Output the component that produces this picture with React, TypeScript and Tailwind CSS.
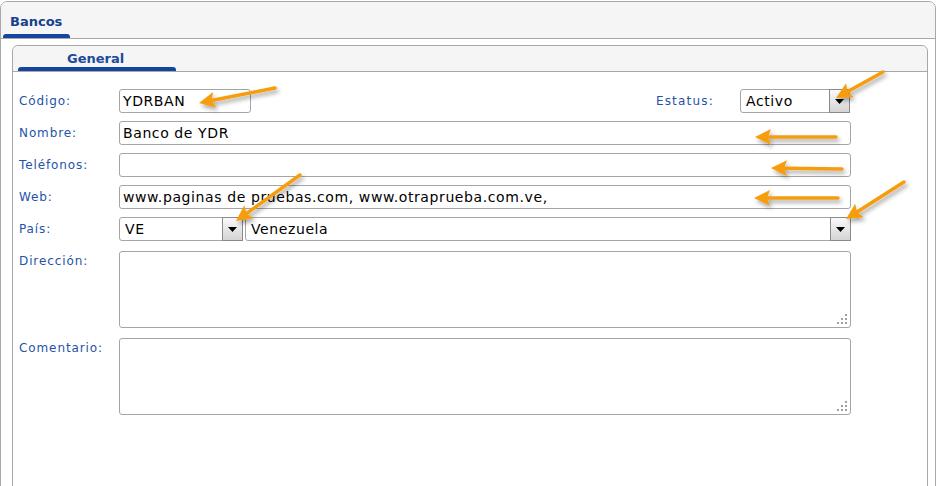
import React from "react";

const font = { fontFamily: '"DejaVu Sans", Verdana, sans-serif' };

function DropBtn() {
  return (
    <div className="-my-[1px] -mr-[1px] flex w-[21px] shrink-0 items-center justify-center border border-[#8a8a8a] bg-gradient-to-b from-[#fafafa] to-[#d4d4d4]">
      <svg width="9" height="5" viewBox="0 0 9 5">
        <polygon points="0,0 9,0 4.5,5" fill="#000" />
      </svg>
    </div>
  );
}

function Select({ value, className }: { value: string; className: string }) {
  return (
    <div className={"flex h-[24px] items-stretch rounded-[3px] border border-[#a5a5a5] bg-white " + className}>
      <div className="flex flex-1 items-center pl-[5px] text-[14px] tracking-[0.6px] text-black">{value}</div>
      <DropBtn />
    </div>
  );
}

function Input({ value, className }: { value?: string; className: string }) {
  return (
    <div className={"flex h-[24px] items-center whitespace-nowrap rounded-[3px] border border-[#a5a5a5] bg-white pl-[3px] text-[14px] tracking-[0.6px] text-black " + className}>
      {value}
    </div>
  );
}

function Label({ children, top }: { children: React.ReactNode; top?: boolean }) {
  return (
    <div className={"w-[100px] shrink-0 text-[12px] tracking-[0.9px] text-[#2453a8] " + (top ? "pt-[1px]" : "")}>
      {children}
    </div>
  );
}

function Grip() {
  const dots = [
    [8, 0],
    [4, 4],
    [8, 4],
    [0, 8],
    [4, 8],
    [8, 8],
  ];
  return (
    <svg className="absolute bottom-[2px] right-[2px]" width="11" height="11" viewBox="0 0 11 11">
      {dots.map(([x, y], i) => (
        <rect key={i} x={x} y={y} width="2" height="2" fill="#a0a0a0" />
      ))}
    </svg>
  );
}

function TextArea() {
  return <div className="relative h-[77px] w-[732px] rounded-[3px] border border-[#a5a5a5] bg-white"><Grip /></div>;
}

const arrows: [number, number, number, number][] = [
  [275, 88, 199, 103],
  [883, 72, 836, 98],
  [836, 137, 755, 137],
  [842, 169, 771, 168],
  [838, 198, 754, 198],
  [300, 175, 236, 221],
  [904, 182, 846, 219],
];

function Arrows() {
  return (
    <svg className="pointer-events-none absolute left-0 top-0" width="937" height="486">
      <defs>
        <filter id="sh" x="-20%" y="-20%" width="160%" height="160%">
          <feDropShadow dx="2" dy="3" stdDeviation="2" floodColor="#000" floodOpacity="0.35" />
        </filter>
      </defs>
      <g filter="url(#sh)">
        {arrows.map(([x1, y1, x2, y2], i) => {
          const dx = x2 - x1;
          const dy = y2 - y1;
          const len = Math.hypot(dx, dy);
          const ux = dx / len;
          const uy = dy / len;
          const hl = 16;
          const hw = 8;
          const bx = x2 - ux * hl;
          const by = y2 - uy * hl;
          const px = -uy;
          const py = ux;
          return (
            <g key={i}>
              <line x1={x1} y1={y1} x2={bx + ux * 2} y2={by + uy * 2} stroke="#f69d10" strokeWidth="3.5" strokeLinecap="round" />
              <polygon
                points={`${x2},${y2} ${bx + px * hw},${by + py * hw} ${bx + ux * 3},${by + uy * 3} ${bx - px * hw},${by - py * hw}`}
                fill="#f69d10"
              />
            </g>
          );
        })}
      </g>
    </svg>
  );
}

export default function App() {
  return (
    <div className="relative h-[486px] w-[937px] overflow-hidden bg-white" style={font}>
      <div className="mt-[1px] h-[520px] w-[936px] rounded-t-[7px] border border-[#a8a8a8] bg-white">
        {/* outer header */}
        <div className="flex h-[37px] items-end rounded-t-[7px] border-b border-[#a8a8a8] bg-[#f5f5f5] pl-[2px]">
          <div className="flex w-[67px] flex-col">
            <div className="pl-[7px] text-[13px] font-bold leading-none text-[#173f8e]">Bancos</div>
            <div className="mt-[6px] h-[4px] rounded-t-[3px] bg-[#1446a0]" />
          </div>
        </div>
        {/* inner panel */}
        <div className="ml-[11px] mr-[7px] mt-[6px] h-[470px] rounded-t-[6px] border border-[#a8a8a8] bg-white">
          <div className="flex h-[26px] items-end rounded-t-[6px] border-b border-[#a8a8a8] bg-[#f5f5f5] pl-[5px]">
            <div className="flex w-[158px] flex-col">
              <div className="pl-[49px] text-[13px] font-bold leading-none text-[#1c4a9c]">General</div>
              <div className="mt-[2px] h-[4px] rounded-t-[3px] bg-[#1446a0]" />
            </div>
          </div>
          <div className="flex flex-col pl-[6px] pt-[17px]">
            <div className="flex items-center">
              <Label>Código:</Label>
              <Input value="YDRBAN" className="w-[132px]" />
              <div className="ml-auto mr-[77px] flex items-center">
                <div className="mr-[26px] text-[12px] tracking-[1.2px] text-[#2453a8]">Estatus:</div>
                <Select value="Activo" className="w-[110px]" />
              </div>
            </div>
            <div className="mt-[8px] flex items-center">
              <Label>Nombre:</Label>
              <Input value="Banco de YDR" className="w-[732px]" />
            </div>
            <div className="mt-[8px] flex items-center">
              <Label>Teléfonos:</Label>
              <Input className="w-[732px]" />
            </div>
            <div className="mt-[8px] flex items-center">
              <Label>Web:</Label>
              <Input value="www.paginas de pruebas.com, www.otraprueba.com.ve," className="w-[732px]" />
            </div>
            <div className="mt-[8px] flex items-center">
              <Label>País:</Label>
              <Select value="VE" className="w-[124px]" />
              <Select value="Venezuela" className="ml-[2px] w-[606px]" />
            </div>
            <div className="mt-[10px] flex items-start">
              <Label top>Dirección:</Label>
              <TextArea />
            </div>
            <div className="mt-[10px] flex items-start">
              <Label top>Comentario:</Label>
              <TextArea />
            </div>
          </div>
        </div>
      </div>
      <Arrows />
    </div>
  );
}
